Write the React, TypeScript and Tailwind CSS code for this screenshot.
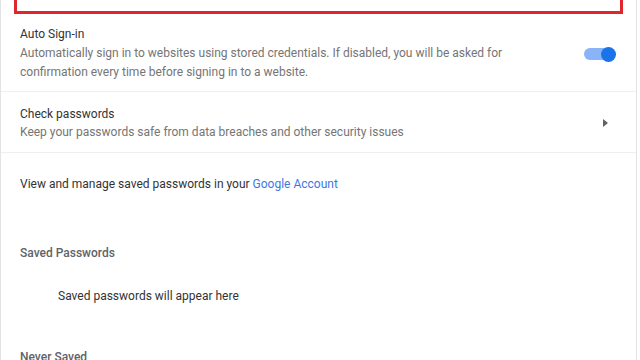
const App = () => {
  return (
    <div className="w-[640px] h-[360px] overflow-hidden bg-white font-['Roboto',sans-serif]">
      <div className="w-[637px] h-full border-l border-r border-[#e3e3e3]">
        {/* highlighted area (top, cut off) */}
        <div className="px-[13px]">
          <div className="h-[14px] border-[3px] border-t-0 border-[#e0252d]"></div>
        </div>

        {/* Auto Sign-in */}
        <div className="flex items-center pl-[19px] pr-[20px] pt-[11px] pb-[9px] border-b border-[#efefef]">
          <div className="flex-1">
            <p className="text-[12px] leading-[19px] text-[#333]">Auto Sign-in</p>
            <p className="text-[12px] leading-[19px] text-[#757575]">
              Automatically sign in to websites using stored credentials. If disabled, you will be asked for
              <br />
              confirmation every time before signing in to a website.
            </p>
          </div>
          <div className="relative w-[32px] h-[16px] flex items-center">
            <div className="w-[26px] h-[12px] rounded-full bg-[#8ab4f8]"></div>
            <div className="absolute right-0 top-[1px] w-[15px] h-[15px] rounded-full bg-[#1a73e8]"></div>
          </div>
        </div>

        {/* Check passwords */}
        <div className="flex items-center pl-[19px] pr-[28px] pt-[13px] pb-[11px] border-b border-[#efefef]">
          <div className="flex-1">
            <p className="text-[12px] leading-[18px] text-[#333]">Check passwords</p>
            <p className="text-[12px] leading-[18px] text-[#757575]">
              Keep your passwords safe from data breaches and other security issues
            </p>
          </div>
          <svg width="5" height="8" viewBox="0 0 5 8">
            <path d="M0 0 L5 4 L0 8 Z" fill="#5f6368" />
          </svg>
        </div>

        {/* Google account link */}
        <div className="pl-[19px] pt-[22px] text-[12px] leading-[18px] text-[#333]">
          View and manage saved passwords in your <span className="text-[#3b78e7]">Google Account</span>
        </div>

        {/* Saved Passwords */}
        <div className="pl-[19px] pt-[51px] text-[12px] leading-[18px] font-medium text-[#5f6368]">
          Saved Passwords
        </div>
        <div className="pl-[57px] pt-[25px] text-[12px] leading-[18px] text-[#333]">
          Saved passwords will appear here
        </div>

        {/* Never Saved */}
        <div className="pl-[19px] pt-[43px] text-[12px] leading-[18px] font-medium text-[#5f6368]">
          Never Saved
        </div>
      </div>
    </div>
  );
};

export default App;
